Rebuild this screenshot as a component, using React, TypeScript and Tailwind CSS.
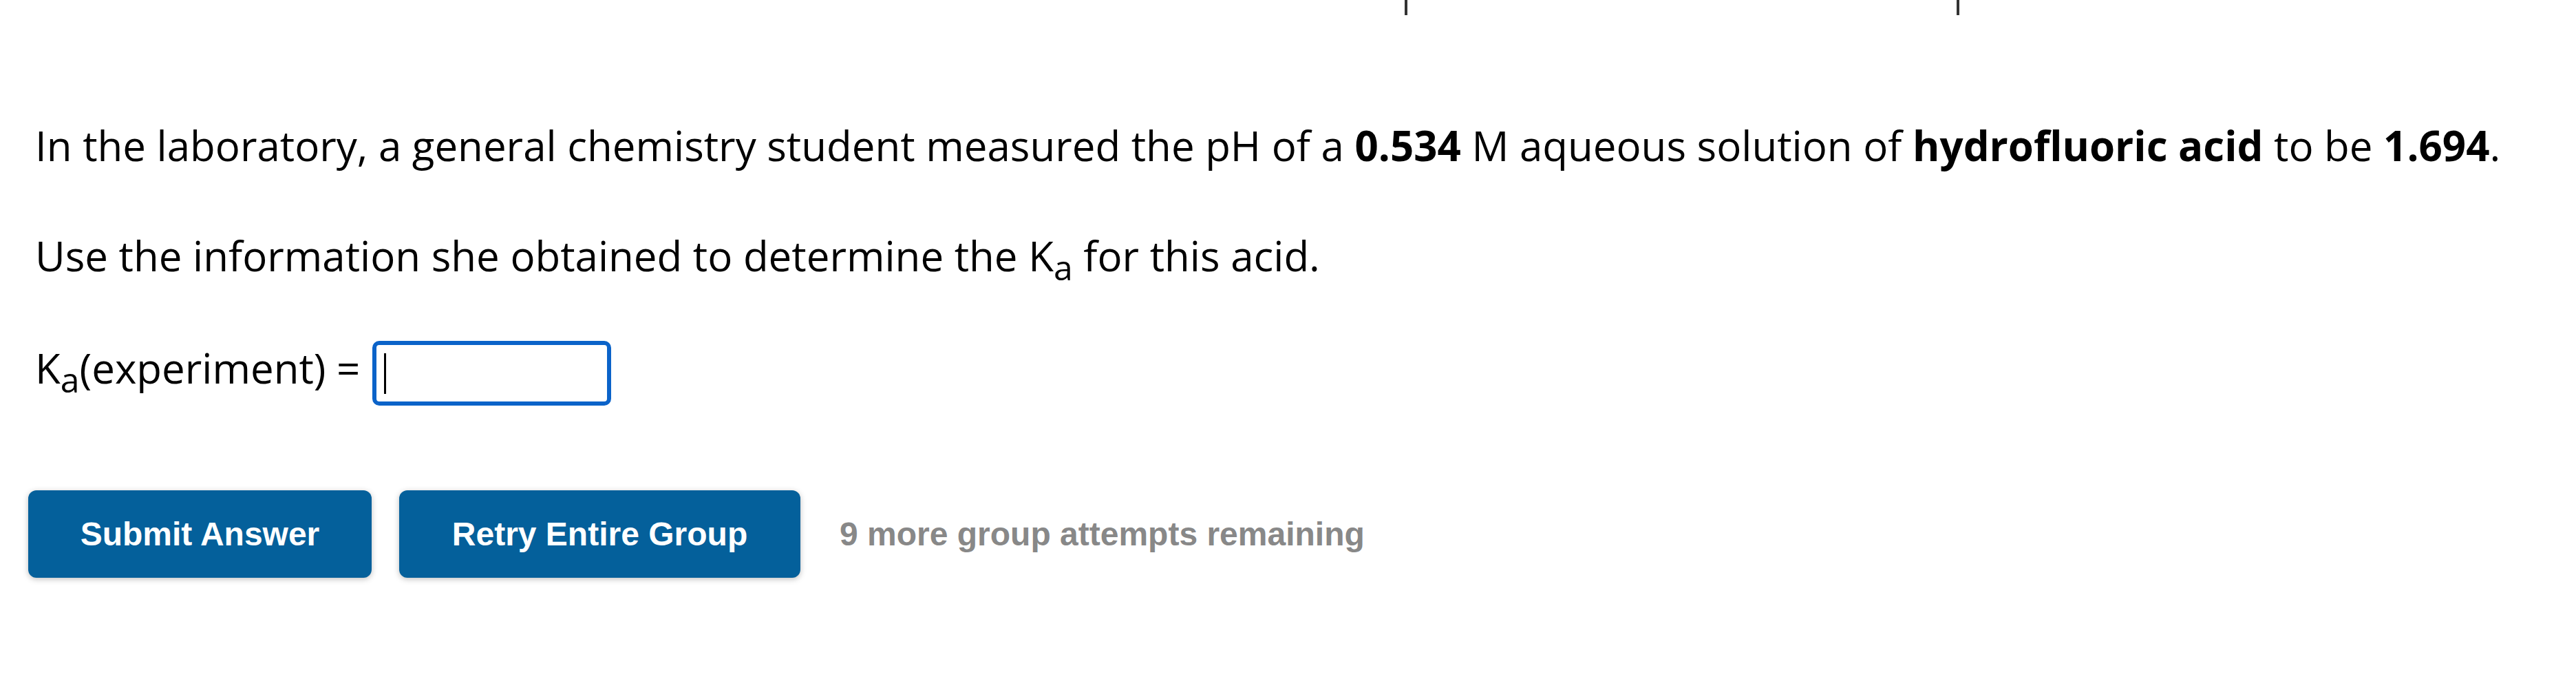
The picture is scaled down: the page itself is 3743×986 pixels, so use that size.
export default function App() {
  return (
    <div className="relative min-h-[986px] w-[3743px] bg-white text-black" style={{ fontFamily: '"Open Sans", "Liberation Sans", sans-serif' }}>
      {/* clipped bits of the line above the viewport */}
      <div className="flex h-[24px]">
        <div className="ml-[2041px] h-[22px] w-[4px] bg-[#333]" />
        <div className="ml-[798px] h-[22px] w-[4px] bg-[#333]" />
      </div>

      <div className="whitespace-nowrap pl-[51px] pt-[141px] text-[60px] leading-[93px]">
        <p>
          In the laboratory, a general chemistry student measured the pH of a <b className="font-bold">0.534</b> M aqueous
          solution of <b className="font-bold">hydrofluoric acid</b> to be <b className="font-bold">1.694</b>.
        </p>

        <p className="mt-[67px]">
          Use the information she obtained to determine the K
          <sub className="relative -bottom-[13px] align-baseline text-[50px]">a</sub> for this acid.
        </p>

        <div className="mt-[70px] flex items-start">
          <span>
            K<sub className="relative -bottom-[13px] align-baseline text-[50px]">a</sub>(experiment) =
          </span>
          <div className="ml-[18px] mt-[7px] flex h-[94px] w-[347px] items-center rounded-[10px] border-[6px] border-[#0b63c9] bg-white pl-[11px]">
            <div className="h-[59px] w-[3px] bg-black" />
          </div>
        </div>
      </div>

      <div
        className="mt-[123px] flex items-center pl-[41px] text-[48px] font-bold"
        style={{ fontFamily: '"Liberation Sans", Arial, sans-serif' }}
      >
        <button className="flex h-[127px] w-[499px] items-center justify-center rounded-[12px] bg-[#04609b] text-white shadow-[0_2px_8px_rgba(0,0,0,0.25)]">
          Submit Answer
        </button>
        <button className="ml-[40px] flex h-[127px] w-[583px] items-center justify-center rounded-[12px] bg-[#04609b] text-white shadow-[0_2px_8px_rgba(0,0,0,0.25)]">
          Retry Entire Group
        </button>
        <span className="ml-[57px] text-[#888888]">9 more group attempts remaining</span>
      </div>
    </div>
  );
}
